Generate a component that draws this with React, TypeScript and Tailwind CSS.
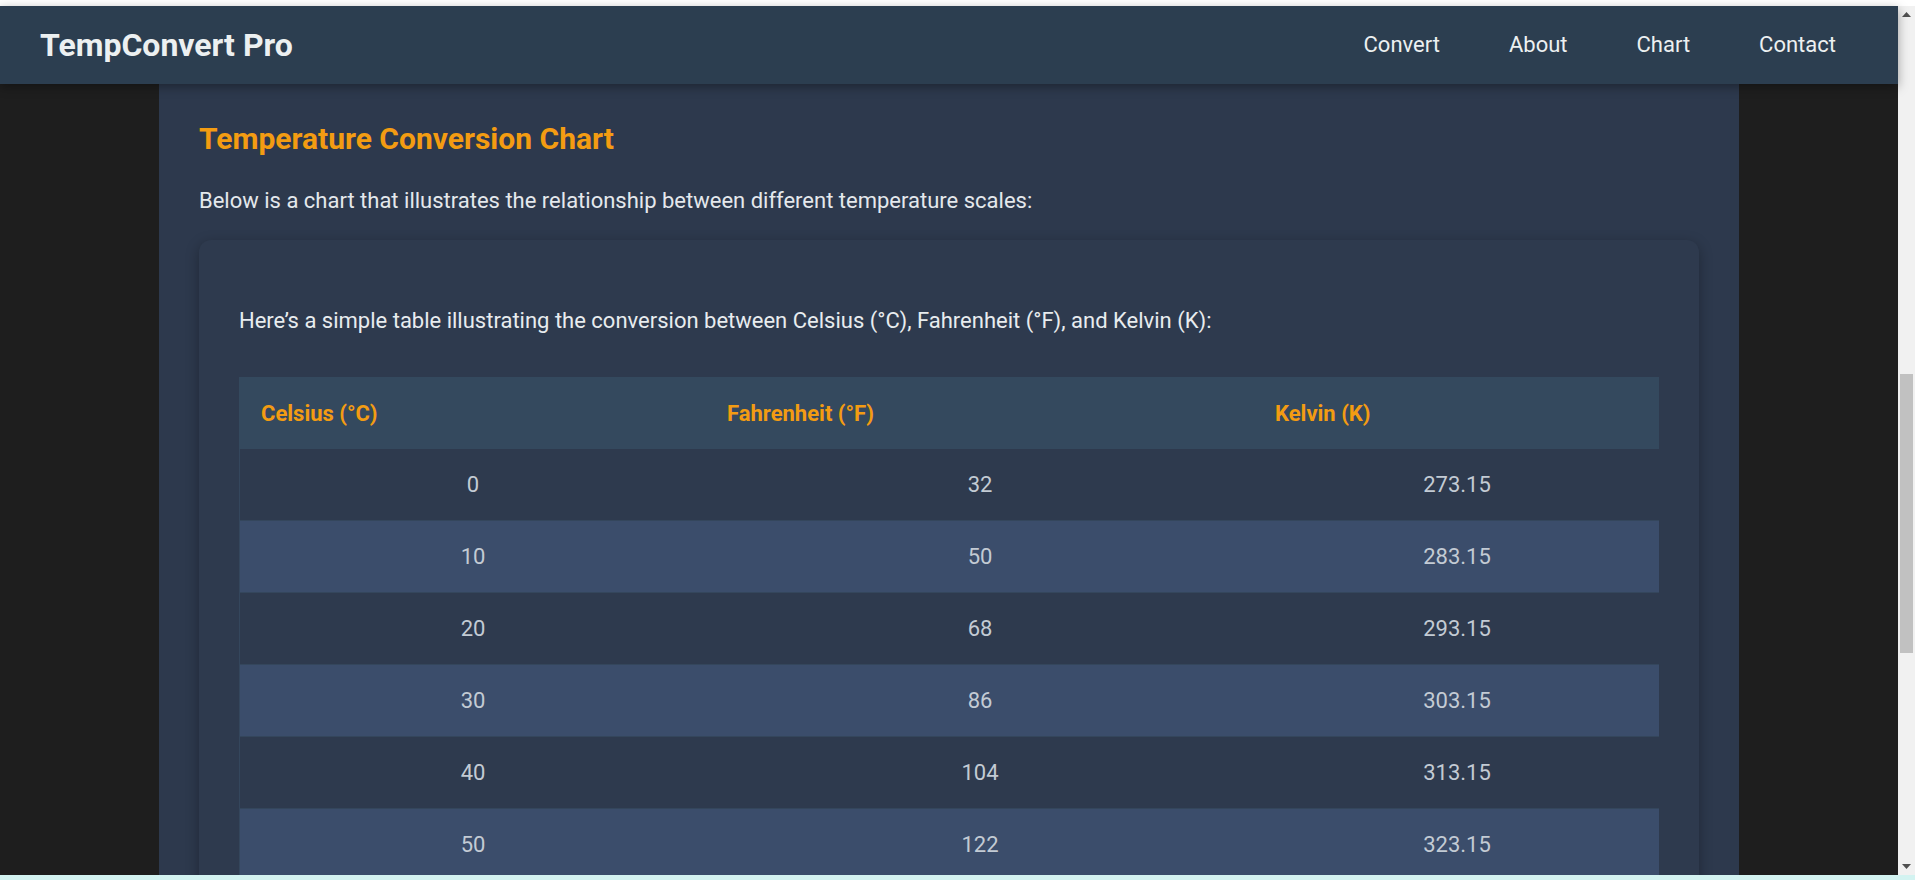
import React from "react";

const rows = [
  ["0", "32", "273.15"],
  ["10", "50", "283.15"],
  ["20", "68", "293.15"],
  ["30", "86", "303.15"],
  ["40", "104", "313.15"],
  ["50", "122", "323.15"],
];

export default function App() {
  return (
    <div className="w-[1915px] h-[880px] flex flex-col overflow-hidden bg-white [font-family:Roboto,'Liberation_Sans',sans-serif]">
      <div className="h-[6px] shrink-0 bg-white" />
      <div className="flex flex-1 min-h-0">
        <div className="flex-1 min-w-0 flex flex-col bg-[#1e1e1e]">
          <nav className="relative z-10 h-[78px] shrink-0 bg-[#2c3e50] flex items-center justify-between pl-10 pr-[62px] shadow-[0_3px_10px_rgba(0,0,0,0.35)]">
            <div className="text-[32px] font-bold text-[#ecf0f1] leading-none">TempConvert Pro</div>
            <ul className="flex gap-[69px] text-[22px] text-[#ecf0f1] -mt-[2px]">
              <li>Convert</li>
              <li>About</li>
              <li>Chart</li>
              <li>Contact</li>
            </ul>
          </nav>
          <div className="flex-1 min-h-0 overflow-hidden">
            <main className="w-[1580px] mx-auto bg-[#2d394d] px-10 pt-[38px] pb-10">
              <h2 className="text-[30px] font-bold text-[#f39c12] leading-[34px]">Temperature Conversion Chart</h2>
              <p className="mt-[30px] text-[22px] leading-[30px] text-[#e4e8ec]">
                Below is a chart that illustrates the relationship between different temperature scales:
              </p>
              <section className="mt-[24px] rounded-xl bg-[#2e3a4e] shadow-[0_4px_14px_rgba(0,0,0,0.3)] px-10 pt-[66px] pb-10">
                <p className="text-[22px] leading-[30px] text-[#e8ecef]">
                  Here’s a simple table illustrating the conversion between Celsius (°C), Fahrenheit (°F), and Kelvin (K):
                </p>
                <div className="mt-[41px] w-[1420px]">
                  <div className="grid grid-cols-[466px_548px_406px] h-[72px] items-center bg-[#34495e] text-[22px] font-bold text-[#f39c12]">
                    <div className="px-[22px]">Celsius (°C)</div>
                    <div className="px-[22px]">Fahrenheit (°F)</div>
                    <div className="px-[22px]">Kelvin (K)</div>
                  </div>
                  {rows.map((r, i) => (
                    <div
                      key={r[0]}
                      className={
                        "grid grid-cols-[466px_548px_406px] h-[72px] items-center text-center text-[22px] text-[#c3cbd4] border-b border-l border-[#34465c] " +
                        (i % 2 === 0 ? "bg-[#2e3a4e]" : "bg-[#3b4d6b]")
                      }
                    >
                      <div className="px-[22px]">{r[0]}</div>
                      <div className="px-[22px]">{r[1]}</div>
                      <div className="px-[22px]">{r[2]}</div>
                    </div>
                  ))}
                </div>
              </section>
            </main>
          </div>
        </div>
        <div className="w-[17px] shrink-0 bg-[#f1f1f1] flex flex-col items-center">
          <div className="h-[17px] w-full flex items-center justify-center">
            <svg width="9" height="5" viewBox="0 0 9 5"><path d="M0 5 L4.5 0 L9 5 Z" fill="#505050" /></svg>
          </div>
          <div className="h-[351px] shrink-0" />
          <div className="h-[279px] w-[13px] bg-[#c1c1c1] shrink-0" />
          <div className="flex-1" />
          <div className="h-[17px] w-full flex items-center justify-center">
            <svg width="9" height="5" viewBox="0 0 9 5"><path d="M0 0 L9 0 L4.5 5 Z" fill="#505050" /></svg>
          </div>
        </div>
      </div>
      <div className="h-[5px] shrink-0 bg-[#d3f3f1]" />
    </div>
  );
}
